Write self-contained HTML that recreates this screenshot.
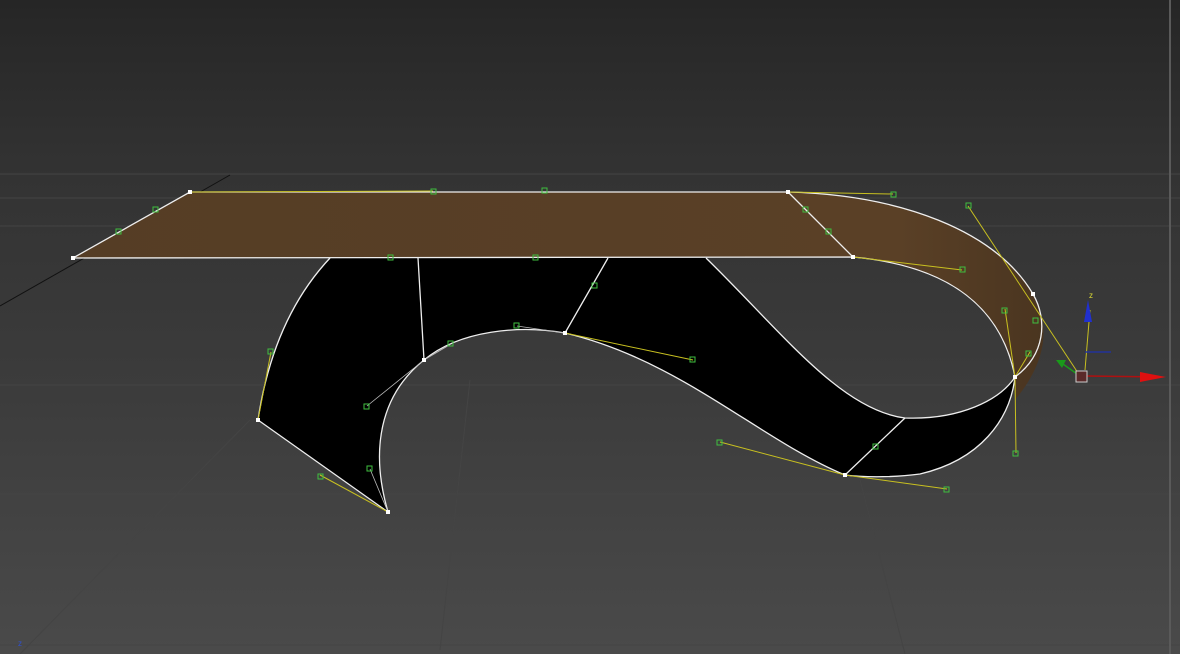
<!DOCTYPE html>
<html><head><style>
html,body{margin:0;padding:0;width:1180px;height:654px;overflow:hidden;background:#333}
svg{display:block}
</style></head><body>
<svg width="1180" height="654" viewBox="0 0 1180 654" xmlns="http://www.w3.org/2000/svg">
<defs>
<linearGradient id="bg" x1="0" y1="0" x2="0" y2="1">
<stop offset="0" stop-color="#262626"/>
<stop offset="0.27" stop-color="#333333"/>
<stop offset="0.6" stop-color="#3c3c3c"/>
<stop offset="1" stop-color="#4a4a4a"/>
</linearGradient>
<linearGradient id="br" x1="0" y1="0" x2="1" y2="0">
<stop offset="0" stop-color="#553d25"/>
<stop offset="0.85" stop-color="#5a4026"/>
<stop offset="1" stop-color="#4a3520"/>
</linearGradient>
</defs>
<rect width="1180" height="654" fill="url(#bg)"/>
<g stroke="#444" stroke-width="1" fill="none">
<line x1="0" y1="174" x2="1180" y2="174"/>
<line x1="0" y1="198" x2="1180" y2="198"/>
<line x1="0" y1="226" x2="1180" y2="226"/>
<line x1="0" y1="385" x2="1180" y2="385"/>
<line x1="0" y1="494" x2="1180" y2="494"/>
<line x1="0" y1="645" x2="1180" y2="645"/>
<line x1="440" y1="650" x2="470" y2="380"/>
<line x1="20" y1="654" x2="250" y2="420"/>
<line x1="905" y1="654" x2="860" y2="480"/>
</g>
<line x1="0" y1="306" x2="230" y2="175" stroke="#111" stroke-width="1"/>
<line x1="1170" y1="0" x2="1170" y2="654" stroke="#5a5a5a" stroke-width="2"/>
<!-- brown plank -->
<path d="M73,258 L190,192 L788,192 C900,195 995,230 1033,294 C1050,325 1048,360 1015,400 L1015,377 C1000,300 940,265 853,257 Z" fill="url(#br)"/>
<!-- black ribbon -->
<path d="M258,420 C270,340 300,290 330,258 L706,258 C780,330 840,410 905,418 C960,420 1000,400 1015,377 C1010,420 980,460 920,474 C890,478 860,477 845,475 C760,440 680,360 565,333 C520,325 460,330 424,360 C380,395 370,450 388,512 Z" fill="#000"/>
<g fill="none" stroke="#eee" stroke-width="1.3">
<path d="M73,258 L190,192 L788,192 C900,195 995,230 1033,294 C1048,320 1045,355 1015,377"/>
<path d="M73,258 L853,257 C940,265 1000,300 1015,377"/>
<path d="M258,420 C270,340 300,290 330,258"/>
<path d="M706,258 C780,330 840,410 905,418 C960,420 1000,400 1015,377 C1010,420 980,460 920,474 C890,478 860,477 845,475 C760,440 680,360 565,333 C520,325 460,330 424,360 C380,395 370,450 388,512 L258,420"/>
<path d="M418,258 L424,360 M608,258 L565,333 M905,418 L845,475 M788,192 L853,257"/>
</g>
<g stroke="#c8c020" stroke-width="1" fill="none">
<line x1="190" y1="192" x2="433" y2="191"/>
<line x1="788" y1="192" x2="893" y2="194"/>
<line x1="853" y1="257" x2="962" y2="270"/>
<line x1="968" y1="206" x2="1080" y2="376"/>
<line x1="1005" y1="309" x2="1015" y2="377"/>
<line x1="1015" y1="377" x2="1016" y2="453"/>
<line x1="1015" y1="377" x2="1030" y2="352"/>
<line x1="565" y1="333" x2="693" y2="360"/>
<line x1="845" y1="475" x2="947" y2="489"/>
<line x1="720" y1="442" x2="845" y2="475"/>
<line x1="258" y1="420" x2="271" y2="352"/>
<line x1="388" y1="512" x2="320" y2="475"/>
<line x1="1090" y1="310" x2="1085" y2="370"/>
</g>
<g stroke="#bbb" stroke-width="0.8">
<line x1="424" y1="360" x2="367" y2="406"/>
<line x1="424" y1="360" x2="451" y2="344"/>
<line x1="388" y1="512" x2="370" y2="469"/>
<line x1="565" y1="333" x2="517" y2="326"/>
</g>
<g fill="none" stroke="#3fbf3f" stroke-width="1">
<rect x="153" y="207" width="5" height="5"/><rect x="116" y="229" width="5" height="5"/>
<rect x="431" y="189" width="5" height="5"/><rect x="542" y="188" width="5" height="5"/>
<rect x="388" y="255" width="5" height="5"/><rect x="533" y="255" width="5" height="5"/>
<rect x="891" y="192" width="5" height="5"/><rect x="966" y="203" width="5" height="5"/>
<rect x="803" y="207" width="5" height="5"/><rect x="826" y="229" width="5" height="5"/>
<rect x="960" y="267" width="5" height="5"/><rect x="1002" y="308" width="5" height="5"/>
<rect x="1033" y="318" width="5" height="5"/><rect x="1026" y="351" width="5" height="5"/>
<rect x="1013" y="451" width="5" height="5"/><rect x="873" y="444" width="5" height="5"/>
<rect x="944" y="487" width="5" height="5"/><rect x="717" y="440" width="5" height="5"/>
<rect x="690" y="357" width="5" height="5"/><rect x="514" y="323" width="5" height="5"/>
<rect x="592" y="283" width="5" height="5"/><rect x="448" y="341" width="5" height="5"/>
<rect x="364" y="404" width="5" height="5"/><rect x="367" y="466" width="5" height="5"/>
<rect x="268" y="349" width="5" height="5"/><rect x="318" y="474" width="5" height="5"/>
</g>
<g fill="#fff">
<rect x="71" y="256" width="4" height="4"/><rect x="188" y="190" width="4" height="4"/>
<rect x="786" y="190" width="4" height="4"/><rect x="851" y="255" width="4" height="4"/>
<rect x="1031" y="292" width="4" height="4"/><rect x="1013" y="375" width="4" height="4"/>
<rect x="422" y="358" width="4" height="4"/><rect x="563" y="331" width="4" height="4"/>
<rect x="843" y="473" width="4" height="4"/><rect x="256" y="418" width="4" height="4"/>
<rect x="386" y="510" width="4" height="4"/>
</g>
<!-- gizmo -->
<polygon points="1088,300 1084,322 1092,322" fill="#2030d0"/>
<text x="1089" y="298" font-family="Liberation Sans,sans-serif" font-size="8" fill="#dd3">z</text>
<polyline points="1085,352 1091,352 1111,352" stroke="#223399" stroke-width="1.5" fill="none"/>
<line x1="1086" y1="376" x2="1160" y2="377" stroke="#b01010" stroke-width="1.5"/>
<polygon points="1140,372 1166,377 1140,382" fill="#e01010"/>
<line x1="1080" y1="376" x2="1060" y2="362" stroke="#1a9a1a" stroke-width="1.5"/>
<polygon points="1056,360 1066,360 1062,368" fill="#1a9a1a"/>
<rect x="1076" y="371" width="11" height="11" fill="#5a2a2a" stroke="#ccc" stroke-width="1"/>
<text x="18" y="646" font-family="Liberation Sans,sans-serif" font-size="8" fill="#3050d0">z</text>
</svg>
</body></html>
